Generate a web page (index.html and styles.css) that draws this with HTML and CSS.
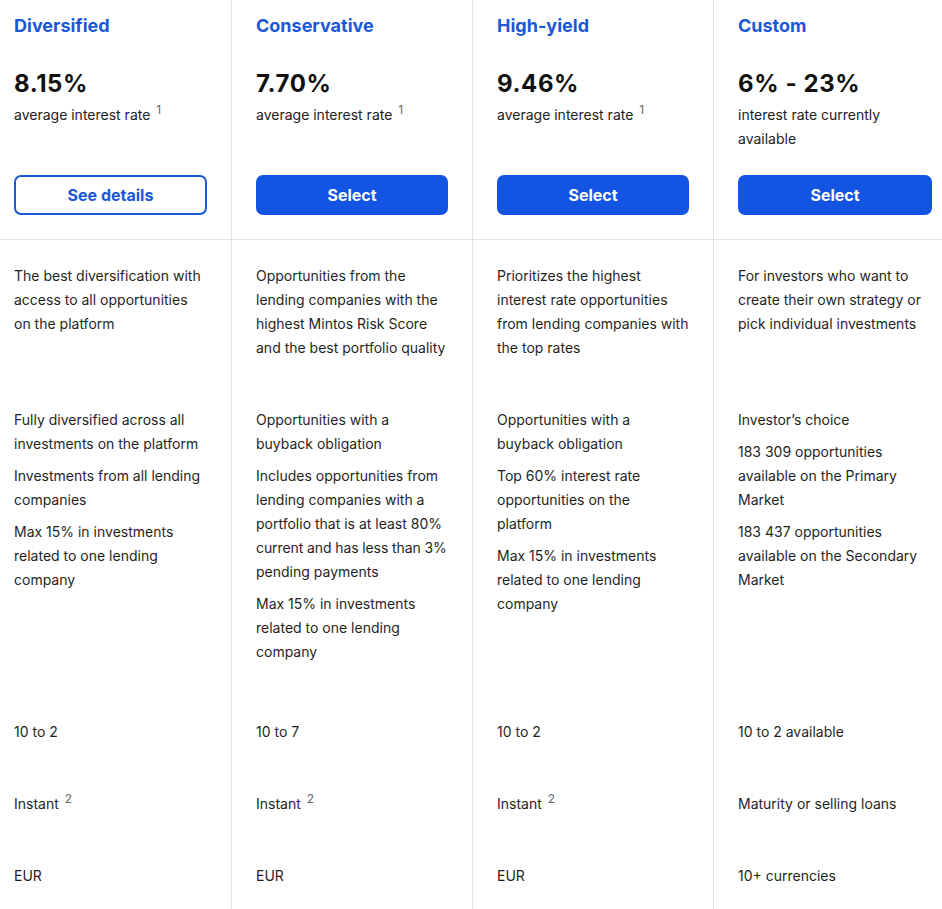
FILE: index.html
```html
<!DOCTYPE html>
<html>
<head>
<meta charset="utf-8">
<link rel="stylesheet" href="styles.css">
</head>
<body>
<div class="table">
  <div class="cell head c1">
    <div class="title">Diversified</div>
    <div class="rate">8.15%</div>
    <div class="sub">average interest rate <sup>1</sup></div>
    <button class="btn outline">See details</button>
  </div>
  <div class="cell head c2">
    <div class="title">Conservative</div>
    <div class="rate">7.70%</div>
    <div class="sub">average interest rate <sup>1</sup></div>
    <button class="btn">Select</button>
  </div>
  <div class="cell head c3">
    <div class="title">High-yield</div>
    <div class="rate">9.46%</div>
    <div class="sub">average interest rate <sup>1</sup></div>
    <button class="btn">Select</button>
  </div>
  <div class="cell head c4">
    <div class="title">Custom</div>
    <div class="rate">6% - 23%</div>
    <div class="sub">interest rate currently available</div>
    <button class="btn">Select</button>
  </div>

  <div class="cell c1"><p>The best diversification with access to all opportunities on the platform</p></div>
  <div class="cell c2"><p>Opportunities from the lending companies with the highest Mintos Risk Score and the best portfolio quality</p></div>
  <div class="cell c3"><p>Prioritizes the highest interest rate opportunities from lending companies with the top rates</p></div>
  <div class="cell c4"><p>For investors who want to create their own strategy or pick individual investments</p></div>

  <div class="cell list c1">
    <p>Fully diversified across all investments on the platform</p>
    <p>Investments from all lending companies</p>
    <p>Max 15% in investments related to one lending company</p>
  </div>
  <div class="cell list c2">
    <p>Opportunities with a buyback obligation</p>
    <p>Includes opportunities from lending companies with a portfolio that is at least 80% <span class="tight">current and has less than 3%</span> pending payments</p>
    <p>Max 15% in investments related to one lending company</p>
  </div>
  <div class="cell list c3">
    <p>Opportunities with a buyback obligation</p>
    <p>Top 60% interest rate opportunities on the<br>platform</p>
    <p>Max 15% in investments related to one lending company</p>
  </div>
  <div class="cell list c4">
    <p>Investor’s choice</p>
    <p>183 309 opportunities available on the Primary Market</p>
    <p>183 437 opportunities available on the Secondary Market</p>
  </div>

  <div class="cell c1"><p>10 to 2</p></div>
  <div class="cell c2"><p>10 to 7</p></div>
  <div class="cell c3"><p>10 to 2</p></div>
  <div class="cell c4"><p>10 to 2 available</p></div>

  <div class="cell c1"><p>Instant <sup>2</sup></p></div>
  <div class="cell c2"><p>Instant <sup>2</sup></p></div>
  <div class="cell c3"><p>Instant <sup>2</sup></p></div>
  <div class="cell c4"><p>Maturity or selling loans</p></div>

  <div class="cell c1"><p>EUR</p></div>
  <div class="cell c2"><p>EUR</p></div>
  <div class="cell c3"><p>EUR</p></div>
  <div class="cell c4"><p>10+ currencies</p></div>
</div>
</body>
</html>
```

FILE: styles.css
```css
html, body {
  margin: 0;
  padding: 0;
  background: #ffffff;
}
body {
  font-family: Inter, "Noto Sans", sans-serif;
  font-size: 14px;
  line-height: 24px;
  color: #1f1f1f;
}
.table {
  display: grid;
  grid-template-columns: 231px 241px 241px 229px;
  width: 942px;
}
.cell {
  padding: 24px;
  box-sizing: border-box;
}
.cell p {
  margin: 0;
}
.c1 {
  padding-left: 14px;
}
.c2, .c3, .c4 {
  border-left: 1px solid #e3e3e3;
}
.c4 {
  padding-right: 10px;
}
.head {
  display: flex;
  flex-direction: column;
  padding-top: 13px;
  border-bottom: 1px solid #e3e3e3;
}
.title {
  font-size: 18px;
  line-height: 26px;
  font-weight: 700;
  color: #1a58d6;
}
.rate {
  margin-top: 29px;
  font-size: 24px;
  line-height: 32px;
  font-weight: 700;
  color: #111111;
  letter-spacing: 0.6px;
}
.sub {
  margin-top: 3px;
  margin-bottom: 24px;
  color: #222222;
}
sup {
  font-size: 12px;
  line-height: 0;
  color: #666666;
  vertical-align: 6px;
  margin-left: 2px;
}
.tight {
  letter-spacing: -0.1px;
  white-space: nowrap;
}
.btn {
  margin-top: auto;
  height: 40px;
  width: 100%;
  border-radius: 7px;
  border: none;
  background: #1355e2;
  color: #ffffff;
  font-family: Inter, "Noto Sans", sans-serif;
  font-size: 16px;
  font-weight: 700;
  cursor: pointer;
}
.btn.outline {
  background: #ffffff;
  color: #1a58d6;
  border: 2px solid #1a58d6;
}
.list p {
  margin-bottom: 8px;
}
```
